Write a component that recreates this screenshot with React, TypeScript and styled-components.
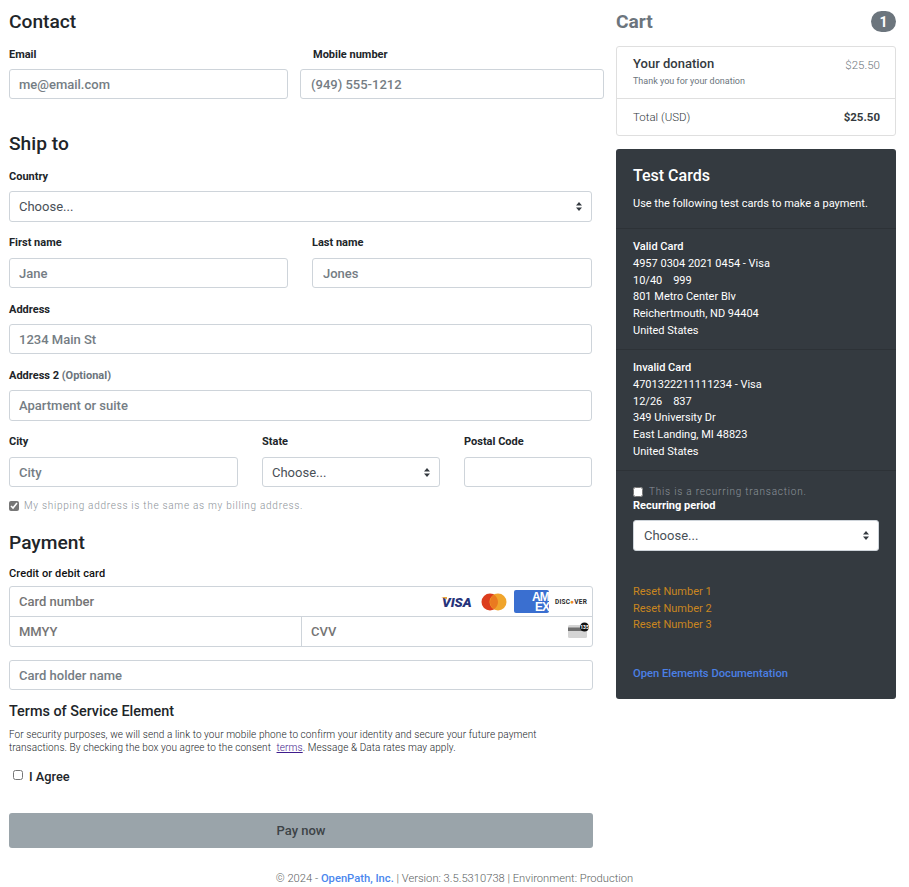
import React, { FC } from 'react'
import styled, { createGlobalStyle } from 'styled-components'

const GlobalStyle = createGlobalStyle`
  html, body {
    margin: 0;
    padding: 0;
    background: #fff;
    font-family: Roboto, "Liberation Sans", sans-serif;
    color: #212529;
  }
  * { box-sizing: border-box; }
`

const Page = styled.div`
  width: 909px;
  height: 887px;
  padding: 10px 13px 0 9px;
  display: flex;
  flex-direction: column;
  overflow: hidden;
`

const Columns = styled.div`
  display: grid;
  grid-template-columns: 584px 280px;
  column-gap: 23px;
  align-items: start;
`

const Main = styled.main`
  display: flex;
  flex-direction: column;
  width: 584px;
`

const Heading = styled.h2<{ $top?: number }>`
  margin: ${(p) => p.$top || 0}px 0 12px;
  font-size: 19.2px;
  line-height: 24px;
  font-weight: 500;
  color: #212529;
`

const Row = styled.div<{ $cols: string; $gap: number; $width?: number }>`
  display: grid;
  grid-template-columns: ${(p) => p.$cols};
  column-gap: ${(p) => p.$gap}px;
  align-items: start;
  width: ${(p) => p.$width || 583}px;
  margin-bottom: 13px;
`

const Field = styled.div<{ $bottom?: number; $width?: number }>`
  display: flex;
  flex-direction: column;
  width: ${(p) => (p.$width ? `${p.$width}px` : 'auto')};
  margin-bottom: ${(p) => p.$bottom || 0}px;
`

const Label = styled.label<{ $indent?: number; $gap?: number }>`
  display: block;
  height: 16px;
  font-size: 11px;
  line-height: 18px;
  font-weight: 700;
  margin: 0 0 ${(p) => p.$gap || 7}px ${(p) => p.$indent || 0}px;
  color: #212529;
`

const Optional = styled.span`
  color: #6c757d;
`

const Input = styled.input<{ $tall?: boolean; $pad?: number }>`
  width: 100%;
  height: ${(p) => (p.$tall ? 31 : 30)}px;
  padding: 0 ${(p) => p.$pad || 9}px;
  font: 500 13px Roboto, sans-serif;
  color: #495057;
  background: #fff;
  border: 1px solid #ced4da;
  border-radius: 3px;
  outline: none;
  &::placeholder {
    color: #757d84;
    opacity: 1;
  }
`

const SelectWrap = styled.div`
  position: relative;
  width: 100%;
`

const NativeSelect = styled.select<{ $pad: number; $height: number }>`
  display: block;
  width: 100%;
  height: ${(p) => p.$height}px;
  padding: 0 ${(p) => p.$pad}px;
  appearance: none;
  font: 400 13px Roboto, sans-serif;
  color: #495057;
  background: #fff;
  border: 1px solid #ced4da;
  border-radius: 3px;
`

const Caret = styled.svg`
  position: absolute;
  right: 10px;
  top: 50%;
  margin-top: -4.5px;
  width: 6px;
  height: 9px;
  pointer-events: none;
`

const Select: FC<{ pad?: number; height?: number }> = ({ pad = 9, height = 31 }) => (
  <SelectWrap>
    <NativeSelect $pad={pad} $height={height} defaultValue="">
      <option value="">Choose...</option>
    </NativeSelect>
    <Caret viewBox="0 0 6 9">
      <path d="M3 0 L6 3.6 H0 Z M3 9 L0 5.4 H6 Z" fill="#343a40" />
    </Caret>
  </SelectWrap>
)

const CheckRow = styled.label`
  display: flex;
  align-items: center;
  gap: 5px;
  font-size: 10px;
  line-height: 12px;
  letter-spacing: 0.72px;
  font-weight: 300;
  color: #868e96;
`

const Check = styled.input`
  width: 10px;
  height: 10px;
  margin: 0;
  flex: none;
  accent-color: #777;
`

const SameAddress = styled(CheckRow)`
  color: #8b9298;
`

const CardLabel = styled.div`
  font-size: 11px;
  line-height: 16px;
  font-weight: 500;
  letter-spacing: 0.1px;
  color: #111;
  margin: -1px 0 4px;
`

const CardBox = styled.div`
  width: 584px;
  height: 61px;
  border: 1px solid #ced4da;
  border-radius: 3px;
  display: flex;
  flex-direction: column;
`

const CardTop = styled.div`
  height: 30px;
  display: flex;
  align-items: center;
  border-bottom: 1px solid #ced4da;
`

const CardBottom = styled.div`
  flex: 1;
  display: grid;
  grid-template-columns: 292px 1fr;
`

const CardCell = styled.div<{ $divider?: boolean }>`
  display: flex;
  align-items: center;
  min-width: 0;
  ${(p) => (p.$divider ? 'border-right: 1px solid #ced4da;' : '')}
`

const BareInput = styled.input`
  flex: 1;
  min-width: 0;
  height: 100%;
  border: 0;
  outline: none;
  padding: 0 0 0 9px;
  background: transparent;
  font: 500 13px Roboto, sans-serif;
  &::placeholder {
    color: #757575;
    opacity: 1;
  }
`

const Brands = styled.div`
  display: flex;
  align-items: center;
  flex: none;
  padding-right: 4px;
`

const Visa = styled.span`
  font: italic 900 13.5px Roboto, sans-serif;
  color: #26337a;
  width: 40px;
  padding-left: 1px;
  position: relative;
  &::before {
    content: '';
    position: absolute;
    left: -1px;
    top: 3px;
    width: 7px;
    height: 3px;
    background: #e6a540;
    clip-path: polygon(0 0, 100% 0, 100% 100%);
  }
`

const MasterIcon = styled.svg`
  width: 26px;
  height: 18px;
  margin-right: 7px;
`

const Amex = styled.div`
  width: 35px;
  height: 23px;
  background: #3a6fd0;
  border-radius: 2px;
  margin-right: 6px;
  padding: 3px 0 0 18px;
  overflow: hidden;
  font: 700 12px/9.5px "Liberation Sans", sans-serif;
  color: #fff;
  letter-spacing: -1px;
  white-space: nowrap;
`

const AmexLine = styled.span`
  display: block;
  &:last-child {
    padding-left: 3px;
  }
`

const Discover = styled.span`
  font: 700 6.5px Roboto, sans-serif;
  color: #2a2a2a;
  letter-spacing: 0.2px;
  width: 33px;
`

const DiscoverO = styled.span`
  color: #ef8a23;
`

const CvvIcon = styled.svg`
  width: 24px;
  height: 20px;
  flex: none;
  margin-right: 1px;
  margin-top: -1px;
`

const HolderInput = styled(Input)`
  margin-top: 13px;
  width: 584px;
`

const TermsTitle = styled.h3`
  margin: 13px 0 7px;
  font-size: 14.4px;
  line-height: 18px;
  font-weight: 500;
  color: #212529;
`

const TermsText = styled.p`
  margin: 0;
  font-size: 10px;
  line-height: 13px;
  font-weight: 300;
  letter-spacing: 0.09px;
  color: #212529;
  width: 560px;
`

const TermsLink = styled.a`
  color: #3f1c8c;
  text-decoration: underline;
  margin-left: 3px;
`

const AgreeRow = styled.label`
  display: flex;
  align-items: center;
  gap: 6px;
  margin: 15px 0 0 4px;
  font-size: 12.8px;
  line-height: 16px;
  font-weight: 500;
  color: #212529;
`

const AgreeBox = styled(Check)`
  margin-top: -4px;
`

const PayButton = styled.button`
  margin-top: 28px;
  width: 584px;
  height: 35px;
  border: 0;
  border-radius: 3px;
  background: #9aa4aa;
  color: #3d4347;
  font: 500 13px Roboto, sans-serif;
`

const Footer = styled.footer`
  margin: 24px 0 0 -9px;
  width: 909px;
  text-align: center;
  font-size: 11.2px;
  line-height: 14px;
  font-weight: 300;
  color: #5c5f62;
`

const FooterLink = styled.a`
  color: #4b87ee;
  font-weight: 500;
`

const Aside = styled.aside`
  display: flex;
  flex-direction: column;
`

const CartHead = styled.div`
  display: flex;
  justify-content: space-between;
  align-items: center;
  height: 24px;
  margin-bottom: 12px;
`

const CartTitle = styled.h2`
  margin: 0;
  font-size: 19.2px;
  line-height: 24px;
  font-weight: 700;
  color: #6c757d;
`

const Badge = styled.span`
  width: 25px;
  height: 21px;
  margin-bottom: 1px;
  border-radius: 11px;
  background: #6c757d;
  color: #fff;
  font-size: 14px;
  font-weight: 700;
  display: flex;
  align-items: center;
  justify-content: center;
`

const CartCard = styled.div`
  border: 1px solid #dfdfdf;
  border-radius: 3px;
  margin-bottom: 13px;
`

const CartRow = styled.div<{ $height: number; $divider?: boolean }>`
  height: ${(p) => p.$height}px;
  padding: 0 15px 0 16px;
  display: flex;
  justify-content: space-between;
  ${(p) => (p.$divider ? 'border-bottom: 1px solid #dfdfdf;' : 'align-items: center;')}
`

const ItemInfo = styled.div`
  padding-top: 9px;
`

const ItemName = styled.div`
  font-size: 13px;
  line-height: 16px;
  font-weight: 500;
  color: #343a40;
`

const ItemNote = styled.div`
  font-size: 9px;
  line-height: 12px;
  margin-top: 3px;
  color: #6c757d;
`

const ItemPrice = styled.span`
  font-size: 11.5px;
  font-weight: 300;
  color: #6c757d;
  padding-top: 11px;
`

const TotalLabel = styled.span`
  font-size: 11.5px;
  font-weight: 300;
  color: #343a40;
`

const TotalValue = styled.span`
  font-size: 11.5px;
  font-weight: 700;
  color: #343a40;
`

const DarkPanel = styled.div`
  height: 550px;
  background: #343a40;
  border-radius: 3px;
  color: #fff;
  display: flex;
  flex-direction: column;
`

const DarkSection = styled.section`
  height: 121px;
  padding: 10px 17px 0;
  border-bottom: 1px solid #2d3237;
  font-size: 11px;
  line-height: 16.8px;
`

const DarkHead = styled.div`
  height: 80px;
  padding: 16px 17px 0;
  border-bottom: 1px solid #2d3237;
`

const DarkTitle = styled.h3`
  margin: 0 0 9px;
  font-size: 16px;
  line-height: 22px;
  font-weight: 500;
`

const DarkText = styled.p`
  margin: 0;
  font-size: 11px;
  line-height: 16px;
`

const CardName = styled.strong`
  display: block;
  font-weight: 500;
`

const CardLine = styled.div``

const DarkFoot = styled.div`
  flex: 1;
  padding: 15px 17px 0;
  display: flex;
  flex-direction: column;
`

const RecurringRow = styled(CheckRow)`
  gap: 6px;
  letter-spacing: 0.8px;
  color: #8d949b;
`

const DarkLabel = styled.div`
  font-size: 11px;
  line-height: 16px;
  font-weight: 700;
  margin: 0 0 6px;
`

const ResetLinks = styled.div`
  margin-top: 33px;
  display: flex;
  flex-direction: column;
`

const ResetLink = styled.a`
  font-size: 11px;
  line-height: 16.5px;
  color: #c9861f;
`

const DocsLink = styled.a`
  margin-top: 32px;
  font-size: 11.2px;
  line-height: 16px;
  font-weight: 500;
  color: #4b80e6;
`

const App: FC = () => (
  <Page>
    <GlobalStyle />
    <Columns>
      <Main>
        <Heading>Contact</Heading>
        <Row $cols="279px 304px" $gap={12} $width={595}>
          <Field>
            <Label>Email</Label>
            <Input placeholder="me@email.com" />
          </Field>
          <Field>
            <Label $indent={13}>Mobile number</Label>
            <Input $pad={10} placeholder="(949) 555-1212" />
          </Field>
        </Row>
        <Heading $top={20}>Ship to</Heading>
        <Field $bottom={12} $width={583}>
          <Label>Country</Label>
          <Select />
        </Field>
        <Row $cols="279px 280px" $gap={24}>
          <Field>
            <Label $gap={8}>First name</Label>
            <Input placeholder="Jane" />
          </Field>
          <Field>
            <Label $gap={8}>Last name</Label>
            <Input $pad={10} placeholder="Jones" />
          </Field>
        </Row>
        <Field $bottom={13} $width={583}>
          <Label>Address</Label>
          <Input placeholder="1234 Main St" />
        </Field>
        <Field $bottom={12} $width={583}>
          <Label>
            Address 2 <Optional>(Optional)</Optional>
          </Label>
          <Input $tall placeholder="Apartment or suite" />
        </Field>
        <Row $cols="229px 178px 128px" $gap={24}>
          <Field>
            <Label $gap={8}>City</Label>
            <Input placeholder="City" />
          </Field>
          <Field>
            <Label $gap={8}>State</Label>
            <Select height={30} />
          </Field>
          <Field>
            <Label $gap={8}>Postal Code</Label>
            <Input />
          </Field>
        </Row>
        <SameAddress>
          <Check type="checkbox" checked readOnly />
          My shipping address is the same as my billing address.
        </SameAddress>
        <Heading $top={19}>Payment</Heading>
        <CardLabel>Credit or debit card</CardLabel>
        <CardBox>
          <CardTop>
            <BareInput placeholder="Card number" />
            <Brands>
              <Visa>VISA</Visa>
              <MasterIcon viewBox="0 0 26 18">
                <circle cx="9" cy="9" r="8.5" fill="#dc3d1d" />
                <circle cx="17" cy="9" r="8.5" fill="#f0a52c" />
                <path d="M13 1.8 a8.5 8.5 0 0 1 0 14.4 a8.5 8.5 0 0 1 0 -14.4 Z" fill="#ea7a20" />
              </MasterIcon>
              <Amex>
                <AmexLine>AM</AmexLine>
                <AmexLine>EX</AmexLine>
              </Amex>
              <Discover>
                DISC<DiscoverO>●</DiscoverO>VER
              </Discover>
            </Brands>
          </CardTop>
          <CardBottom>
            <CardCell $divider>
              <BareInput placeholder="MMYY" />
            </CardCell>
            <CardCell>
              <BareInput placeholder="CVV" />
              <CvvIcon viewBox="0 0 24 20">
                <rect x="1" y="4" width="19" height="13" rx="1.5" fill="#d4d4d4" />
                <rect x="1" y="6.5" width="19" height="3.5" fill="#6f6f6f" />
                <circle cx="17.5" cy="6" r="4.5" fill="#111" />
                <text x="17.5" y="7.8" textAnchor="middle" fontSize="5" fontWeight="700" fill="#fff" fontFamily="Roboto, sans-serif">
                  135
                </text>
              </CvvIcon>
            </CardCell>
          </CardBottom>
        </CardBox>
        <HolderInput placeholder="Card holder name" />
        <TermsTitle>Terms of Service Element</TermsTitle>
        <TermsText>
          For security purposes, we will send a link to your mobile phone to confirm your identity and secure your future payment transactions. By checking the box you agree to the consent <TermsLink>terms</TermsLink>. Message &amp; Data rates may apply.
        </TermsText>
        <AgreeRow>
          <AgreeBox type="checkbox" />I Agree
        </AgreeRow>
        <PayButton>Pay now</PayButton>
        <Footer>
          © 2024 - <FooterLink>OpenPath, Inc.</FooterLink> | Version: 3.5.5310738 | Environment: Production
        </Footer>
      </Main>
      <Aside>
        <CartHead>
          <CartTitle>Cart</CartTitle>
          <Badge>1</Badge>
        </CartHead>
        <CartCard>
          <CartRow $height={52} $divider>
            <ItemInfo>
              <ItemName>Your donation</ItemName>
              <ItemNote>Thank you for your donation</ItemNote>
            </ItemInfo>
            <ItemPrice>$25.50</ItemPrice>
          </CartRow>
          <CartRow $height={36}>
            <TotalLabel>Total (USD)</TotalLabel>
            <TotalValue>$25.50</TotalValue>
          </CartRow>
        </CartCard>
        <DarkPanel>
          <DarkHead>
            <DarkTitle>Test Cards</DarkTitle>
            <DarkText>Use the following test cards to make a payment.</DarkText>
          </DarkHead>
          <DarkSection>
            <CardName>Valid Card</CardName>
            <CardLine>4957 0304 2021 0454 - Visa</CardLine>
            <CardLine>10/40 &nbsp;&nbsp; 999</CardLine>
            <CardLine>801 Metro Center Blv</CardLine>
            <CardLine>Reichertmouth, ND 94404</CardLine>
            <CardLine>United States</CardLine>
          </DarkSection>
          <DarkSection>
            <CardName>Invalid Card</CardName>
            <CardLine>4701322211111234 - Visa</CardLine>
            <CardLine>12/26 &nbsp;&nbsp; 837</CardLine>
            <CardLine>349 University Dr</CardLine>
            <CardLine>East Landing, MI 48823</CardLine>
            <CardLine>United States</CardLine>
          </DarkSection>
          <DarkFoot>
            <RecurringRow>
              <Check type="checkbox" />
              This is a recurring transaction.
            </RecurringRow>
            <DarkLabel>Recurring period</DarkLabel>
            <Select pad={10} />
            <ResetLinks>
              <ResetLink>Reset Number 1</ResetLink>
              <ResetLink>Reset Number 2</ResetLink>
              <ResetLink>Reset Number 3</ResetLink>
            </ResetLinks>
            <DocsLink>Open Elements Documentation</DocsLink>
          </DarkFoot>
        </DarkPanel>
      </Aside>
    </Columns>
  </Page>
)

export default App
